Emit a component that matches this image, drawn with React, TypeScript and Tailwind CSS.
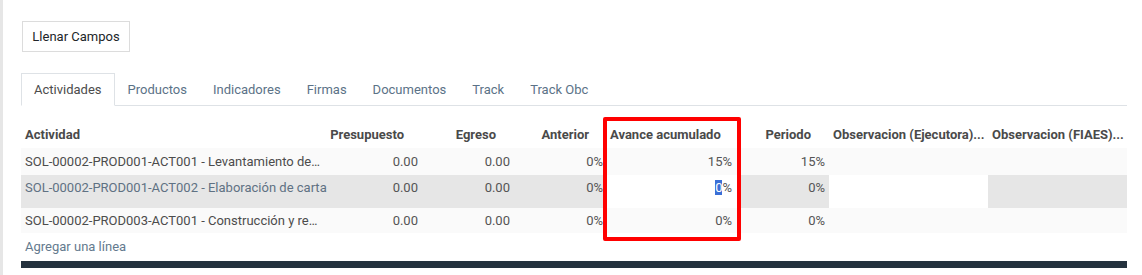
import React from 'react';

const cols = 'grid grid-cols-[306px_95px_92px_93px_130px_92px_159px_139px]';

const headers = [
  { label: 'Actividad', num: false },
  { label: 'Presupuesto', num: true },
  { label: 'Egreso', num: true },
  { label: 'Anterior', num: true },
  { label: 'Avance acumulado', num: false },
  { label: 'Periodo', num: true },
  { label: 'Observacion (Ejecutora)...', num: false },
  { label: 'Observacion (FIAES)...', num: false },
];

const tabs = ['Actividades', 'Productos', 'Indicadores', 'Firmas', 'Documentos', 'Track', 'Track Obc'];

const rows = [
  { name: 'SOL-00002-PROD001-ACT001 - Levantamiento de diagnóstico', avance: '15%', periodo: '15%' },
  { name: 'SOL-00002-PROD001-ACT002 - Elaboración de cartas de compromiso', avance: '0%', periodo: '0%', editing: true },
  { name: 'SOL-00002-PROD003-ACT001 - Construcción y reparación', avance: '0%', periodo: '0%' },
];

export default function App() {
  return (
    <div className="relative h-[275px] w-[1142px] overflow-hidden border-l-[3px] border-[#e6e6e6] bg-white font-['Roboto',sans-serif] text-[13px] text-[#4c4c4c]">
      <div className="pl-[18px] pr-[15px]">
        <button className="ml-[1px] mt-[21px] h-[31px] w-[108px] border border-[#dcdcdc] bg-white text-[13px] text-[#212529]">
          Llenar Campos
        </button>

        {/* tabs */}
        <div className="mt-[21px] flex h-[33px] border-b border-[#dee2e6]">
          {tabs.map((t, i) => (
            <div
              key={t}
              className={
                i === 0
                  ? 'mb-[-1px] flex items-center border border-b-white border-[#dee2e6] bg-white px-[12px] pt-[1px] text-[#4c4c4c]'
                  : 'flex items-center px-[13px] pt-[1px] text-[#5b7287]'
              }
            >
              {t}
            </div>
          ))}
        </div>

        {/* table */}
        <div className="mt-[13px]">
          <div className={`${cols} h-[29px] items-center pt-[3px] font-bold text-[#4a4a4a]`}>
            {headers.map((h) => (
              <div
                key={h.label}
                className={`overflow-hidden whitespace-nowrap ${h.num ? 'pr-[18px] text-right' : h.label === 'Avance acumulado' ? 'pl-[3px]' : 'px-[4px]'}`}
              >
                {h.label}
              </div>
            ))}
          </div>

          {rows.map((r, i) => (
            <div
              key={r.name}
              className={`${cols} ${r.editing ? 'h-[33px] items-start bg-[#e6e6e6] pt-[3px]' : i === 0 ? 'h-[27px] items-center bg-[#fafafa]' : 'h-[25px] items-center bg-[#fafafa]'} text-[#4c4c4c]`}
            >
              <div className={`px-[4px] ${r.editing ? 'overflow-hidden whitespace-nowrap text-[#5f7183]' : 'truncate'}`}>
                {r.name}
              </div>
              <div className="px-[4px] text-right text-[#555]">0.00</div>
              <div className="px-[4px] text-right text-[#555]">0.00</div>
              <div className="pr-[4px] text-right text-[#555]">0%</div>
              <div
                className={`flex items-center justify-end pr-[5px] text-[#555] ${r.editing ? 'mt-[-3px] h-[33px] items-start bg-white pt-[3px]' : 'h-full'}`}
              >
                {r.editing ? (
                  <span>
                    <span className="bg-[#3a6fd6] text-white">0</span>%
                  </span>
                ) : (
                  r.avance
                )}
              </div>
              <div className="pr-[4px] text-right text-[#555]">{r.periodo}</div>
              <div className={r.editing ? 'mt-[-3px] h-[33px] bg-white' : 'h-full'} />
              <div className="h-full" />
            </div>
          ))}

          <div className="flex h-[27px] items-center px-[4px] text-[#647a8e]">Agregar una línea</div>
          <div className="mt-[1px] h-[7px] bg-[#24323e]" />
        </div>
      </div>

      {/* annotation */}
      <div className="absolute left-[600px] top-[117px] h-[124px] w-[138px] rounded-[2px] border-[4px] border-[#ff0000]" />
    </div>
  );
}
